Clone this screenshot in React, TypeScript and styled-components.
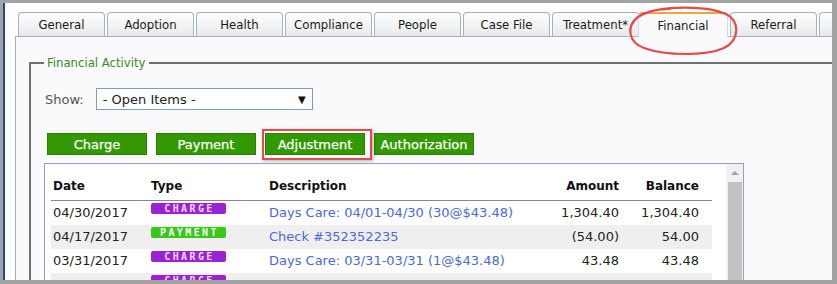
import styled, { createGlobalStyle } from 'styled-components';

const GlobalStyle = createGlobalStyle`
  html, body {
    margin: 0;
    padding: 0;
  }
  body {
    background: #a3a3a3;
    font-family: 'DejaVu Sans', Verdana, sans-serif;
    color: #222;
  }
`;

const Frame = styled.div`
  box-sizing: border-box;
  height: 284px;
  padding: 3px 5px 4px 3px;
`;

const Window = styled.div`
  background: #fff;
  border-left: 2px solid #1f4a9c;
  height: 100%;
  overflow: hidden;
  padding-top: 9px;
  box-sizing: border-box;
`;

const TabStrip = styled.div`
  align-items: flex-end;
  display: flex;
  height: 24px;
  padding-left: 13px;
  position: relative;
  white-space: nowrap;
`;

const Tab = styled.div<{ $active?: boolean }>`
  align-items: center;
  background: ${(p) => (p.$active ? '#fafafc' : 'linear-gradient(#fefefe, #e8e9ea)')};
  border: 1px solid ${(p) => (p.$active ? '#d6dbe0' : '#a4b2bf')};
  border-bottom: none;
  border-top: ${(p) => (p.$active ? '2px solid #e9a93a' : '1px solid #a4b2bf')};
  border-radius: 4px 4px 0 0;
  box-sizing: border-box;
  color: #1a1a1a;
  display: flex;
  flex: none;
  font-family: 'DejaVu Sans Condensed', 'DejaVu Sans', sans-serif;
  font-size: 13px;
  font-stretch: condensed;
  height: ${(p) => (p.$active ? '25px' : '24px')};
  justify-content: center;
  margin-bottom: ${(p) => (p.$active ? '-1px' : '0')};
  margin-left: ${(p) => (p.$active ? '-3px' : '0')};
  margin-right: 2px;
  position: relative;
  width: ${(p) => (p.$active ? '90px' : '87px')};
  z-index: ${(p) => (p.$active ? 1 : 0)};
`;

const Circle = styled.svg`
  left: 621px;
  overflow: visible;
  pointer-events: none;
  position: absolute;
  top: -6px;
  z-index: 2;
`;

const Panel = styled.div`
  background: #fafafc;
  border-left: 1px solid #a6b0bb;
  border-top: 1px solid #a6b0bb;
  height: 260px;
  margin-left: 10px;
  width: 900px;
`;

const Fieldset = styled.fieldset`
  border: 2px solid #707070;
  margin: 18px 0 0 13px;
  min-width: 0;
  padding: 17px 0 0 13px;
  height: 260px;
`;

const Legend = styled.legend`
  color: #3b8a22;
  font-family: 'DejaVu Sans Condensed', 'DejaVu Sans', sans-serif;
  font-size: 13px;
  font-stretch: condensed;
  line-height: 16px;
  padding: 0 3px;
`;

const ShowRow = styled.div`
  align-items: center;
  display: flex;
  gap: 12px;
  height: 22px;
  margin-left: 1px;
`;

const Label = styled.span`
  color: #555;
  font-size: 13px;
`;

const SelectBox = styled.div`
  align-items: center;
  background: #fff;
  border: 1px solid #7f9db9;
  box-sizing: border-box;
  display: flex;
  font-size: 13px;
  height: 22px;
  justify-content: space-between;
  padding: 0 6px 0 6px;
  width: 217px;
`;

const Arrow = styled.span`
  font-size: 10px;
  color: #111;
`;

const ButtonRow = styled.div`
  display: flex;
  gap: 9px;
  margin: 23px 0 0 3px;
`;

const Button = styled.button`
  background: #339900;
  border: 1px solid #2a7e00;
  box-sizing: border-box;
  color: #fff;
  cursor: pointer;
  font-family: 'DejaVu Sans', Verdana, sans-serif;
  font-size: 13px;
  height: 22px;
  padding: 0;
  width: 100px;
  -webkit-text-stroke: 0.25px #fff;
`;

const Highlighted = styled.span`
  display: inline-flex;
  position: relative;
`;

const HighlightBox = styled.span`
  border: 2px solid #e8474c;
  bottom: -5px;
  box-shadow: 1px 1px 3px rgba(0, 0, 0, 0.3);
  left: -3px;
  pointer-events: none;
  position: absolute;
  right: -7px;
  top: -4px;
`;

const TableBox = styled.div`
  background: #fff;
  border: 1px solid #8fa3bb;
  display: flex;
  height: 140px;
  margin-top: 8px;
  width: 700px;
  box-sizing: border-box;
`;

const TableArea = styled.div`
  flex: 1;
  padding: 0 14px 0 6px;
`;

const Scrollbar = styled.div`
  background: #f0f0f0;
  display: flex;
  flex-direction: column;
  width: 17px;
`;

const ScrollArrow = styled.div`
  align-items: center;
  display: flex;
  height: 17px;
  justify-content: center;
  &::before {
    border-bottom: 4px solid #a3a3a3;
    border-left: 4px solid transparent;
    border-right: 4px solid transparent;
    content: '';
  }
`;

const ScrollThumb = styled.div`
  background: #c1c1c1;
  flex: 1;
  margin: 1px 1px 0 2px;
`;

const columns = '98px 118px 264px 90px 80px';

const HeaderRow = styled.div`
  border-bottom: 1px solid #888;
  color: #111;
  display: grid;
  font-size: 12px;
  font-weight: bold;
  grid-template-columns: ${columns};
  line-height: 16px;
  padding: 14px 10px 6px 0;
`;

const Row = styled.div<{ $shaded?: boolean }>`
  align-items: center;
  background: ${(p) => (p.$shaded ? '#efefef' : '#fff')};
  display: grid;
  font-size: 13px;
  grid-template-columns: ${columns};
  height: 24px;
  line-height: 16px;
  padding-right: 10px;
  white-space: nowrap;
`;

const Cell = styled.div<{ $right?: boolean }>`
  padding: 0 2px;
  text-align: ${(p) => (p.$right ? 'right' : 'left')};
`;

const TypeCell = styled.div`
  align-self: start;
  padding: 2px 2px 0;
`;

const Badge = styled.span<{ $kind: 'charge' | 'payment' }>`
  background: ${(p) => (p.$kind === 'charge' ? '#9a22d2' : '#36c91a')};
  border-radius: 2px;
  box-sizing: border-box;
  color: ${(p) => (p.$kind === 'charge' ? '#ead8ff' : '#f2fff0')};
  display: block;
  font-family: 'DejaVu Sans Mono', monospace;
  font-size: 10px;
  font-weight: bold;
  height: 11px;
  letter-spacing: 2.4px;
  line-height: 11px;
  overflow: hidden;
  padding-left: 2px;
  text-align: center;
  width: 75px;
`;

const Link = styled.a`
  color: #4b6ad8;
  text-decoration: none;
`;

type Item = {
  date: string;
  type: 'charge' | 'payment';
  description: string;
  amount: string;
  balance: string;
};

const items: Item[] = [
  { date: '04/30/2017', type: 'charge', description: 'Days Care: 04/01-04/30 (30@$43.48)', amount: '1,304.40', balance: '1,304.40' },
  { date: '04/17/2017', type: 'payment', description: 'Check #352352235', amount: '(54.00)', balance: '54.00' },
  { date: '03/31/2017', type: 'charge', description: 'Days Care: 03/31-03/31 (1@$43.48)', amount: '43.48', balance: '43.48' },
  { date: '', type: 'charge', description: '', amount: '', balance: '' },
];

const tabs = ['General', 'Adoption', 'Health', 'Compliance', 'People', 'Case File', 'Treatment*', 'Financial', 'Referral', 'C'];

function App() {
  return (
    <>
      <GlobalStyle />
      <Frame>
        <Window>
          <TabStrip>
            {tabs.map((tab) => (
              <Tab key={tab} $active={tab === 'Financial'}>{tab}</Tab>
            ))}
            <Circle width="112" height="50" viewBox="0 0 112 50">
              <path
                d="M18 8 C35 0 80 -1 100 8 C114 15 114 34 98 42 C80 50 40 50 18 42 C2 36 0 20 12 11 C20 5 34 3 44 3"
                fill="none"
                stroke="#e8474c"
                strokeWidth="2.2"
                strokeLinecap="round"
              />
            </Circle>
          </TabStrip>
          <Panel>
            <Fieldset>
              <Legend>Financial Activity</Legend>
              <ShowRow>
                <Label>Show:</Label>
                <SelectBox>
                  <span>- Open Items -</span>
                  <Arrow>▼</Arrow>
                </SelectBox>
              </ShowRow>
              <ButtonRow>
                <Button>Charge</Button>
                <Button>Payment</Button>
                <Highlighted>
                  <Button>Adjustment</Button>
                  <HighlightBox />
                </Highlighted>
                <Button>Authorization</Button>
              </ButtonRow>
              <TableBox>
                <TableArea>
                  <HeaderRow>
                    <Cell>Date</Cell>
                    <Cell>Type</Cell>
                    <Cell>Description</Cell>
                    <Cell $right>Amount</Cell>
                    <Cell $right>Balance</Cell>
                  </HeaderRow>
                  {items.map((item, i) => (
                    <Row key={i} $shaded={i % 2 === 1}>
                      <Cell>{item.date}</Cell>
                      <TypeCell>
                        <Badge $kind={item.type}>{item.type.toUpperCase()}</Badge>
                      </TypeCell>
                      <Cell>{item.description && <Link href="#">{item.description}</Link>}</Cell>
                      <Cell $right>{item.amount}</Cell>
                      <Cell $right>{item.balance}</Cell>
                    </Row>
                  ))}
                </TableArea>
                <Scrollbar>
                  <ScrollArrow />
                  <ScrollThumb />
                </Scrollbar>
              </TableBox>
            </Fieldset>
          </Panel>
        </Window>
      </Frame>
    </>
  );
}

export default App;
